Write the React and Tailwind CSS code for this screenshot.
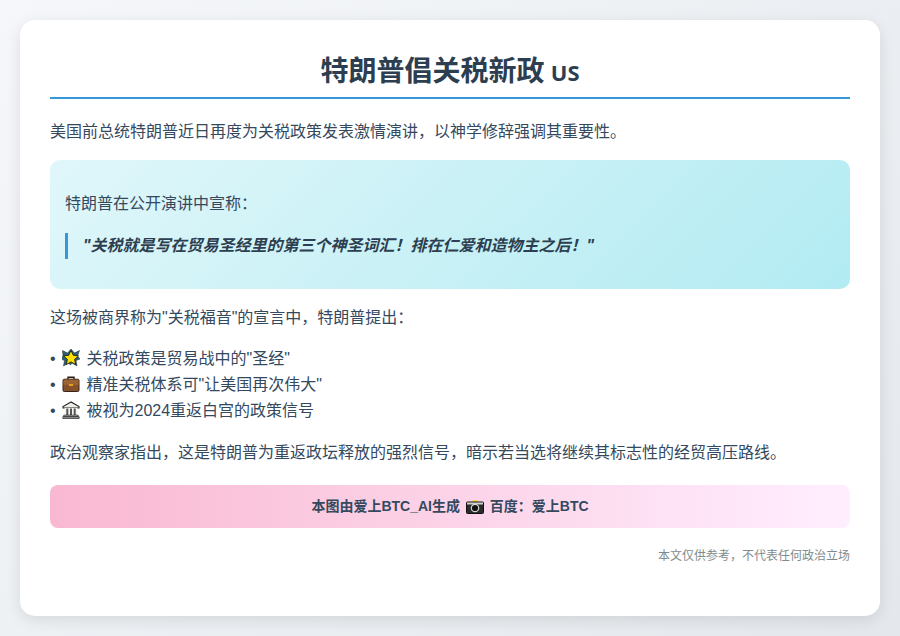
function Emoji({ children, w = "w-[18px]", h = "h-[18px]", box = "0 0 18 18" }) {
  return (
    <span className="inline-flex w-[22px] justify-center align-[-3px]">
      <svg viewBox={box} className={`${w} ${h}`}>{children}</svg>
    </span>
  );
}

function Star() {
  return (
    <Emoji>
      <path d="M.5 1.500l5 2.500L9 0l3.500 4 5-2.500-2 5.500 2.500 3-4 1.500 1 5.500-5-3-1.500 2-2-2-5 3 1-5.500-4-1.500 2.500-3z" fill="#2d6075" stroke="#1c2a30" strokeWidth=".5" />
      <path d="M9 1.500l2.300 4.800 5.200.6-3.900 3.500 1.100 5.100L9 12.900l-4.700 2.600 1.100-5.100L1.500 6.900l5.200-.6z" fill="#ffe000" stroke="#111" strokeWidth=".8" />
    </Emoji>
  );
}

function Case() {
  return (
    <Emoji>
      <path d="M6 4.500V2.200h6v2.300" fill="none" stroke="#2a1d14" strokeWidth="1.400" />
      <rect x="1" y="4.200" width="16" height="12.300" rx="1.200" fill="#85512a" stroke="#3a2618" strokeWidth="1" />
      <rect x="1.500" y="4.700" width="15" height="5.200" fill="#9b6233" />
      <rect x="7" y="9" width="4" height="2" fill="#e4a11b" />
    </Emoji>
  );
}

function Bank() {
  return (
    <Emoji>
      <path d="M9 1L1 5.600v1.400h16V5.600z" fill="#eeeeea" stroke="#222" strokeWidth="1.100" />
      <rect x="2.600" y="7" width="12.800" height="7" fill="#f5f4ef" />
      <path d="M4.300 7.500h2v6.500h-2zM8 7.500h2v6.500H8zM11.700 7.500h2v6.500h-2z" fill="#555" />
      <path d="M1.800 14.200h14.400v1.600H1.800zM.8 15.800h16.400v1.600H.8z" fill="#e6e6e1" stroke="#222" strokeWidth=".8" />
    </Emoji>
  );
}

function Camera() {
  return (
    <Emoji box="0 0 18 14" h="h-[14px]">
      <rect x="6.500" y=".3" width="5" height="2.700" fill="#f2d91c" />
      <rect x=".5" y="2" width="17" height="11.500" rx="1" fill="#2b2b2b" stroke="#111" />
      <rect x="1" y="2.500" width="16" height="2" fill="#cfcfcf" />
      <circle cx="9" cy="8" r="3.700" fill="#111" stroke="#d8d8d8" strokeWidth="1.200" />
    </Emoji>
  );
}

export default function App() {
  return (
    <div className="min-h-[636px] p-5 bg-[linear-gradient(135deg,#f5f7fa,#e4e8ec)] text-[#34495e] text-[16px] leading-[1.6] font-['Liberation_Sans','Noto_Sans_CJK_SC',sans-serif]">
      <div className="bg-white rounded-[15px] p-[30px] h-[596px] shadow-[0_4px_15px_rgba(0,0,0,0.1)]">
        <h1 className="text-[28px] font-bold text-[#2c3e50] text-center leading-[1.4] pb-2 border-b-2 border-[#3498db] mb-5 font-['Noto_Sans_CJK_SC',sans-serif]">
          特朗普倡关税新政 <span className="text-[22px] font-['Noto_Sans',sans-serif]">US</span>
        </h1>
        <p className="mb-[15px]">美国前总统特朗普近日再度为关税政策发表激情演讲，以神学修辞强调其重要性。</p>
        <div className="rounded-[10px] p-[15px] mt-[15px] mb-4 bg-[linear-gradient(135deg,#e0f7fa,#b2ebf2)]">
          <p className="mt-4 mb-[17px]">特朗普在公开演讲中宣称：</p>
          <div className="border-l-[3px] border-[#3498db] pl-[15px] mb-[15px] italic font-bold text-[#2c3e50]">"关税就是写在贸易圣经里的第三个神圣词汇！排在仁爱和造物主之后！"</div>
        </div>
        <p className="mb-[15px]">这场被商界称为"关税福音"的宣言中，特朗普提出：</p>
        <div className="mb-4 leading-[26px]">
          <div>• <Star /> 关税政策是贸易战中的"圣经"</div>
          <div>• <Case /> 精准关税体系可"让美国再次伟大"</div>
          <div>• <Bank /> 被视为2024重返白宫的政策信号</div>
        </div>
        <p>政治观察家指出，这是特朗普为重返政坛释放的强烈信号，暗示若当选将继续其标志性的经贸高压路线。</p>
        <div className="rounded-lg p-[10px] mt-5 mb-5 text-center text-[14px] font-bold bg-[linear-gradient(90deg,#f9b8d1,#ffeeff)]">本图由爱上BTC_AI生成 <Camera /> 百度：爱上BTC</div>
        <div className="text-right text-xs text-[#7f8c8d]">本文仅供参考，不代表任何政治立场</div>
      </div>
    </div>
  );
}
